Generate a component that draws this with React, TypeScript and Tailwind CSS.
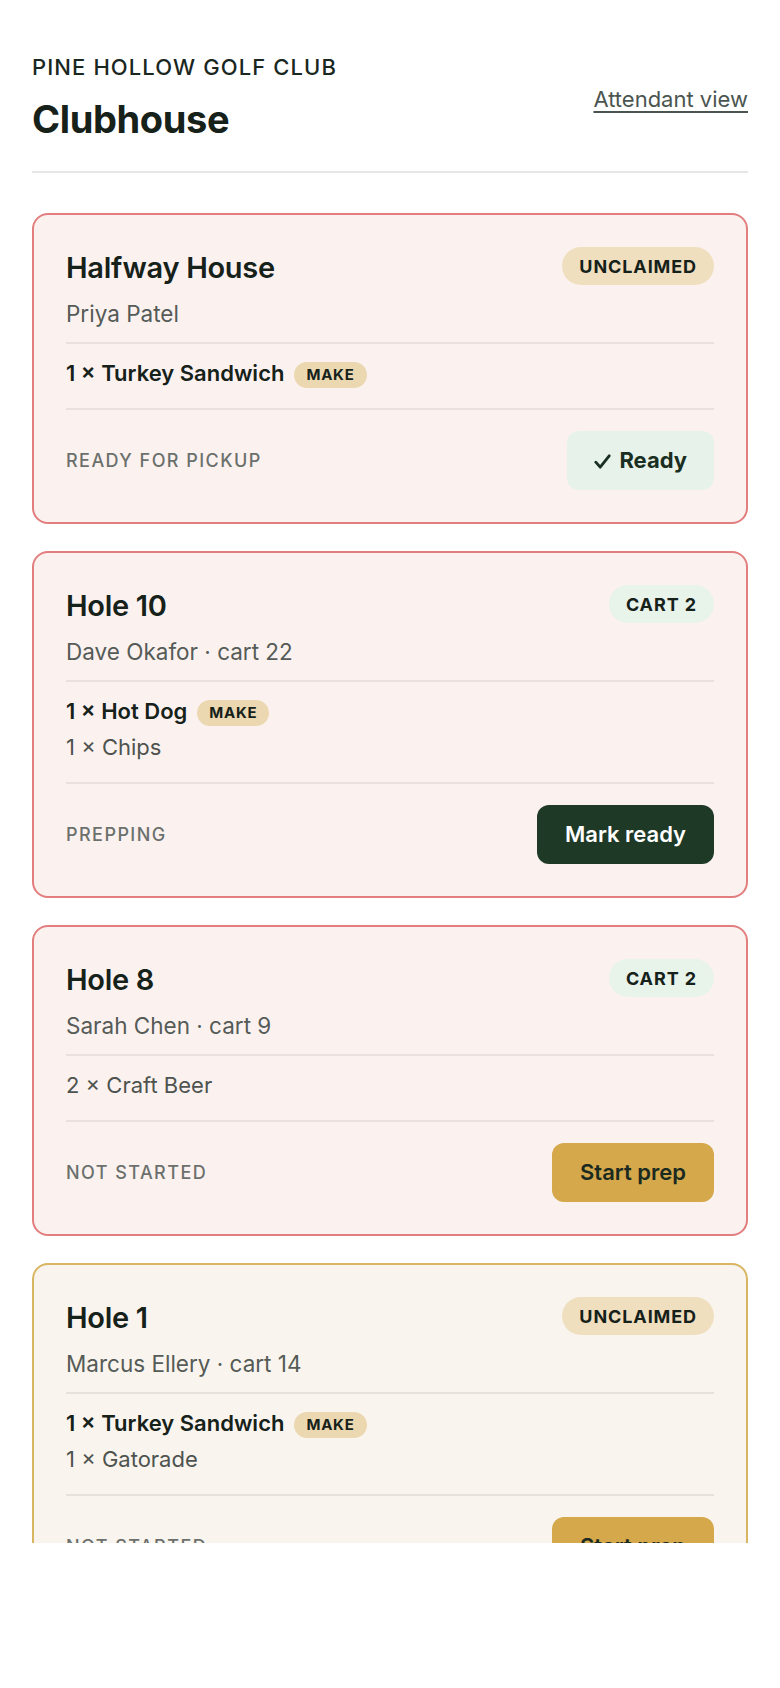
import React from "react";

type Item = { qty: number; name: string; make?: boolean };
type Order = {
  title: string;
  sub: string;
  pill: { label: string; kind: "unclaimed" | "cart" };
  items: Item[];
  status: string;
  action: "ready" | "mark" | "start";
  tone: "red" | "gold";
};

const orders: Order[] = [
  {
    title: "Halfway House",
    sub: "Priya Patel",
    pill: { label: "UNCLAIMED", kind: "unclaimed" },
    items: [{ qty: 1, name: "Turkey Sandwich", make: true }],
    status: "READY FOR PICKUP",
    action: "ready",
    tone: "red",
  },
  {
    title: "Hole 10",
    sub: "Dave Okafor · cart 22",
    pill: { label: "CART 2", kind: "cart" },
    items: [
      { qty: 1, name: "Hot Dog", make: true },
      { qty: 1, name: "Chips" },
    ],
    status: "PREPPING",
    action: "mark",
    tone: "red",
  },
  {
    title: "Hole 8",
    sub: "Sarah Chen · cart 9",
    pill: { label: "CART 2", kind: "cart" },
    items: [{ qty: 2, name: "Craft Beer" }],
    status: "NOT STARTED",
    action: "start",
    tone: "red",
  },
  {
    title: "Hole 1",
    sub: "Marcus Ellery · cart 14",
    pill: { label: "UNCLAIMED", kind: "unclaimed" },
    items: [
      { qty: 1, name: "Turkey Sandwich", make: true },
      { qty: 1, name: "Gatorade" },
    ],
    status: "NOT STARTED",
    action: "start",
    tone: "gold",
  },
];

function Card({ o }: { o: Order }) {
  const cardCls =
    o.tone === "red"
      ? "border-[#e27e7e] bg-[#fbf2f0]"
      : "border-[#d8b560] bg-[#f9f5ee]";
  const divCls = o.tone === "red" ? "border-[#ebe0de]" : "border-[#e8e3da]";
  return (
    <div className={`rounded-2xl border-2 px-8 pt-8 pb-8 ${cardCls}`}>
      <div className={`border-b-2 pb-[13px] ${divCls}`}>
        <div className="flex items-start justify-between">
          <div className="text-[29px] leading-[42px] font-semibold text-[#16211a] tracking-[-0.01em]">
            {o.title}
          </div>
          <div
            className={`flex h-[38px] items-center rounded-full px-[17px] text-[18px] font-bold tracking-[0.05em] text-[#16211a] ${
              o.pill.kind === "unclaimed" ? "bg-[#f0dfbf]" : "bg-[#e8f3ea]"
            }`}
          >
            {o.pill.label}
          </div>
        </div>
        <div className="mt-[10px] text-[22.5px] leading-[30px] text-[#555b57]">
          {o.sub}
        </div>
      </div>
      <div className={`flex flex-col gap-1 border-b-2 pt-[13px] pb-[19px] ${divCls}`}>
        {o.items.map((it, i) => (
          <div key={i} className="flex items-center gap-2.5 h-8">
            <span
              className={`text-[22px] leading-8 ${
                it.make ? "font-semibold text-[#16211a]" : "text-[#4e534f]"
              }`}
            >
              {it.qty} × {it.name}
            </span>
            {it.make && (
              <span className="mt-1 flex h-[26px] items-center rounded-full bg-[#ebd8b0] px-3 text-[15px] font-bold tracking-[0.05em] text-[#16211a]">
                MAKE
              </span>
            )}
          </div>
        ))}
      </div>
      <div className="flex items-center justify-between pt-[21px]">
        <div className="text-[18px] font-medium tracking-[0.08em] text-[#6b706c]">
          {o.status}
        </div>
        {o.action === "ready" && (
          <div className="flex h-[59px] items-center gap-2 rounded-xl bg-[#e7f3ea] px-[27px] text-[22px] font-bold text-[#1b2e22]">
            <svg width="17" height="17" viewBox="0 0 17 17" className="mt-0.5">
              <path
                d="M1.8 9.2 L6.2 14.2 L15.2 2.8"
                fill="none"
                stroke="#1b2e22"
                strokeWidth="2.8"
                strokeLinecap="round"
                strokeLinejoin="round"
              />
            </svg>
            <span>Ready</span>
          </div>
        )}
        {o.action === "mark" && (
          <div className="flex h-[59px] items-center rounded-xl bg-[#1e3a27] px-7 text-[22px] font-semibold text-white">
            Mark ready
          </div>
        )}
        {o.action === "start" && (
          <div className="flex h-[59px] items-center rounded-xl bg-[#d4a84b] px-7 text-[22px] font-semibold text-[#1b2a20]">
            Start prep
          </div>
        )}
      </div>
    </div>
  );
}

export default function App() {
  return (
    <div className="h-[1543px] overflow-hidden bg-white font-['Inter',sans-serif]">
      <div className="px-8 pt-[53px]">
        <div className="flex items-center justify-between border-b-2 border-[#e6e6e6] pb-[30px]">
          <div>
            <div className="text-[22px] leading-7 font-medium tracking-[0.05em] text-[#1a271f]">
              PINE HOLLOW GOLF CLUB
            </div>
            <div className="mt-4 text-[38px] leading-[44px] font-bold text-[#16211a] tracking-[-0.01em]">
              Clubhouse
            </div>
          </div>
          <div className="mt-1 text-[22px] leading-7 text-[#4b5550] underline underline-offset-4 decoration-[1.5px]">
            Attendant view
          </div>
        </div>
        <div className="mt-10 flex flex-col gap-[27px]">
          {orders.map((o, i) => (
            <Card key={i} o={o} />
          ))}
        </div>
      </div>
    </div>
  );
}
